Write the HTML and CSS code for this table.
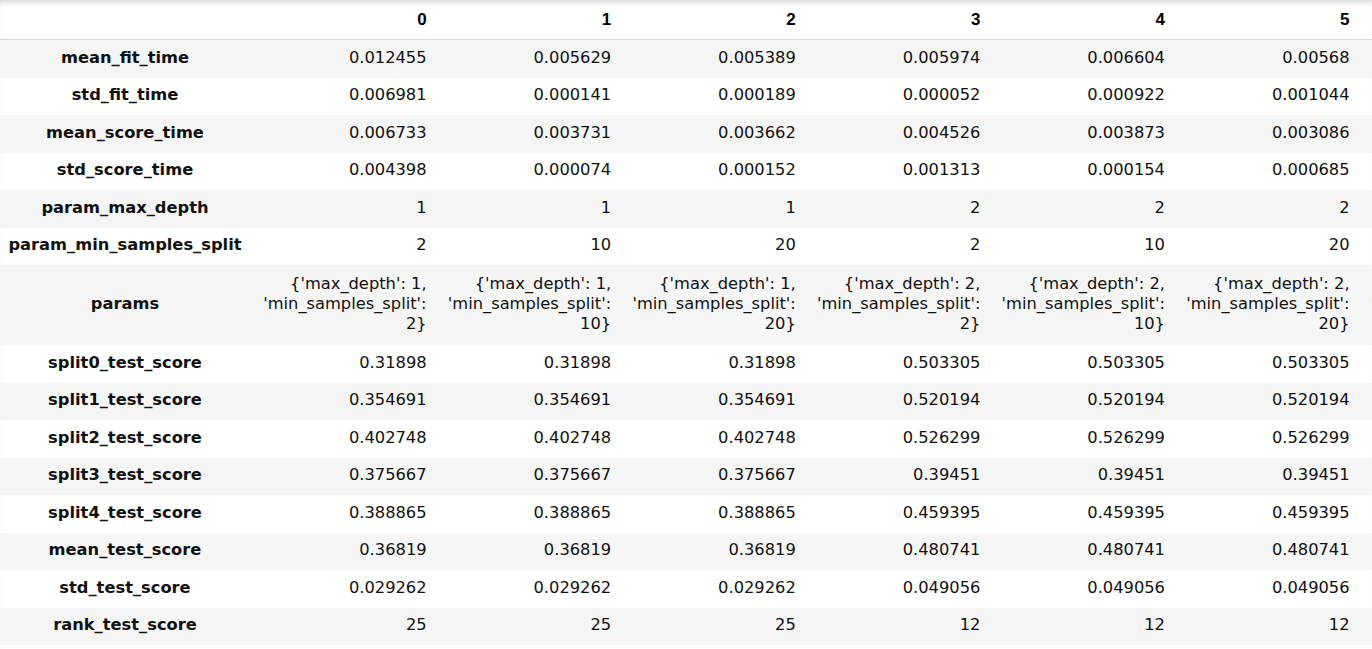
FILE: index.html
```html
<!DOCTYPE html>
<html>
<head>
<meta charset="utf-8">
<link rel="stylesheet" href="styles.css">
</head>
<body>
<div class="frame">
<table class="df">
<colgroup>
<col class="c-idx"><col class="c-val"><col class="c-val"><col class="c-val"><col class="c-val"><col class="c-val"><col class="c-val"><col class="c-val">
</colgroup>
<thead>
<tr><th></th><th>0</th><th>1</th><th>2</th><th>3</th><th>4</th><th>5</th><th>6</th></tr>
</thead>
<tbody>
<tr><th>mean_fit_time</th><td>0.012455</td><td>0.005629</td><td>0.005389</td><td>0.005974</td><td>0.006604</td><td>0.00568</td><td>0.007311</td></tr>
<tr><th>std_fit_time</th><td>0.006981</td><td>0.000141</td><td>0.000189</td><td>0.000052</td><td>0.000922</td><td>0.001044</td><td>0.000358</td></tr>
<tr><th>mean_score_time</th><td>0.006733</td><td>0.003731</td><td>0.003662</td><td>0.004526</td><td>0.003873</td><td>0.003086</td><td>0.003524</td></tr>
<tr><th>std_score_time</th><td>0.004398</td><td>0.000074</td><td>0.000152</td><td>0.001313</td><td>0.000154</td><td>0.000685</td><td>0.000402</td></tr>
<tr><th>param_max_depth</th><td>1</td><td>1</td><td>1</td><td>2</td><td>2</td><td>2</td><td>3</td></tr>
<tr><th>param_min_samples_split</th><td>2</td><td>10</td><td>20</td><td>2</td><td>10</td><td>20</td><td>2</td></tr>
<tr class="multi"><th>params</th><td>{'max_depth': 1, 'min_samples_split': 2}</td><td>{'max_depth': 1, 'min_samples_split': 10}</td><td>{'max_depth': 1, 'min_samples_split': 20}</td><td>{'max_depth': 2, 'min_samples_split': 2}</td><td>{'max_depth': 2, 'min_samples_split': 10}</td><td>{'max_depth': 2, 'min_samples_split': 20}</td><td>{'max_depth': 3, 'min_samples_split': 2}</td></tr>
<tr><th>split0_test_score</th><td>0.31898</td><td>0.31898</td><td>0.31898</td><td>0.503305</td><td>0.503305</td><td>0.503305</td><td>0.586437</td></tr>
<tr><th>split1_test_score</th><td>0.354691</td><td>0.354691</td><td>0.354691</td><td>0.520194</td><td>0.520194</td><td>0.520194</td><td>0.590127</td></tr>
<tr><th>split2_test_score</th><td>0.402748</td><td>0.402748</td><td>0.402748</td><td>0.526299</td><td>0.526299</td><td>0.526299</td><td>0.611520</td></tr>
<tr><th>split3_test_score</th><td>0.375667</td><td>0.375667</td><td>0.375667</td><td>0.39451</td><td>0.39451</td><td>0.39451</td><td>0.468233</td></tr>
<tr><th>split4_test_score</th><td>0.388865</td><td>0.388865</td><td>0.388865</td><td>0.459395</td><td>0.459395</td><td>0.459395</td><td>0.552391</td></tr>
<tr><th>mean_test_score</th><td>0.36819</td><td>0.36819</td><td>0.36819</td><td>0.480741</td><td>0.480741</td><td>0.480741</td><td>0.561742</td></tr>
<tr><th>std_test_score</th><td>0.029262</td><td>0.029262</td><td>0.029262</td><td>0.049056</td><td>0.049056</td><td>0.049056</td><td>0.050210</td></tr>
<tr><th>rank_test_score</th><td>25</td><td>25</td><td>25</td><td>12</td><td>12</td><td>12</td><td>7</td></tr>
</tbody>
</table>
</div>
</body>
</html>
```

FILE: styles.css
```css
html, body {
  margin: 0;
  padding: 0;
  background: #ffffff;
  overflow: hidden;
}

.frame {
  width: 1372px;
  height: 649px;
  overflow: hidden;
  box-shadow: inset 0 6px 6px -4px rgba(0, 0, 0, 0.18);
}

.df {
  border-collapse: collapse;
  table-layout: fixed;
  width: 1542px;
  font-family: "DejaVu Sans", Verdana, sans-serif;
  font-size: 16.3px;
  line-height: 20px;
  color: #111111;
}

.c-idx { width: 250px; }
.c-val { width: 184.6px; }

.df th,
.df td {
  padding: 7.75px 8px 9.75px 8px;
  text-align: right;
  vertical-align: middle;
  border: none;
}

.df thead th {
  font-family: "Liberation Sans Narrow", "Liberation Sans", Arial, sans-serif;
  font-weight: bold;
  font-size: 17px;
  color: #000000;
  height: 21.5px;
  padding: 9px 8px 8.5px 8px;
  border-bottom: 1px solid #d8d8d8;
}

.df tbody th {
  font-weight: bold;
  text-align: center;
  color: #111111;
}

.df tbody tr:nth-child(odd) {
  background: #f5f5f5;
}

.df tbody tr.multi th,
.df tbody tr.multi td {
  padding-top: 9px;
  padding-bottom: 11px;
}
```
